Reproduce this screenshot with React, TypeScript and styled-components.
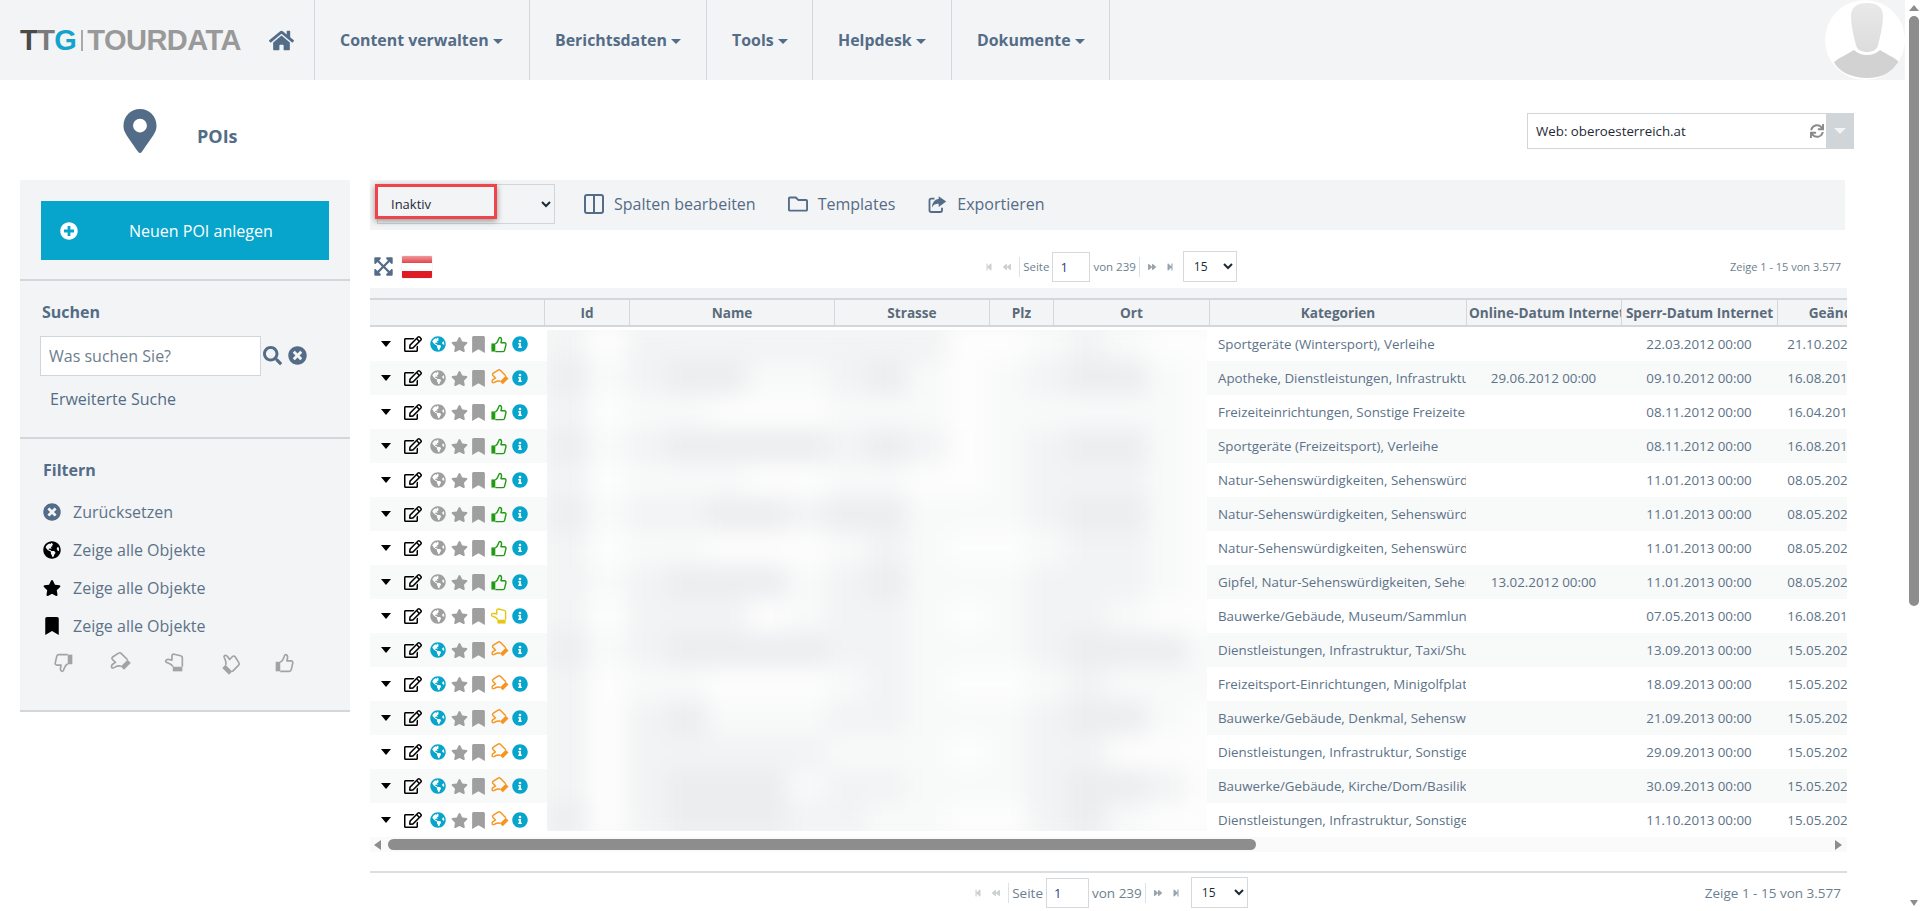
import styled, { createGlobalStyle } from 'styled-components'
import { Columns2 } from 'lucide-react'
import {
  FaBackward,
  FaBookmark,
  FaExpandArrowsAlt,
  FaForward,
  FaGlobeAmericas,
  FaHome,
  FaInfoCircle,
  FaMapMarkerAlt,
  FaPlusCircle,
  FaRegEdit,
  FaRegFolder,
  FaSearch,
  FaStar,
  FaStepBackward,
  FaStepForward,
  FaSync,
  FaTimesCircle,
} from 'react-icons/fa'

const colors = {
  panel: '#f3f4f6',
  line: '#d3d7da',
  slate: '#536c87',
  text: '#5c7288',
  blue: '#07a5cc',
  grey: '#9f9f9f',
  green: '#1f9a12',
  orange: '#f7941d',
  yellow: '#e6c814',
}

const GlobalStyle = createGlobalStyle`
  html, body {
    margin: 0;
    height: 100%;
    overflow: hidden;
    background: #fff;
  }
  body {
    font-family: "Open Sans", "Liberation Sans", sans-serif;
    color: ${colors.text};
  }
`

const Page = styled.div`
  display: flex;
  height: 911px;
  overflow: hidden;
`

const Main = styled.div`
  flex: 1;
  min-width: 0;
`

const PageScrollbar = styled.div`
  width: 15px;
  display: flex;
  flex-direction: column;
  align-items: center;
  background: #fff;
`

const ScrollThumbV = styled.div`
  width: 10px;
  height: 590px;
  margin-left: 3px;
  border-radius: 5px;
  background: #8d8d8d;
`

const ArrowUp = styled.div`
  margin: 5px 0 5px 3px;
  border-left: 5px solid transparent;
  border-right: 5px solid transparent;
  border-bottom: 6px solid #8d8d8d;
`

const ArrowDown = styled.div`
  margin: auto 0 5px 3px;
  border-left: 4px solid transparent;
  border-right: 4px solid transparent;
  border-top: 6px solid #8d8d8d;
`

const Header = styled.header`
  height: 80px;
  display: flex;
  align-items: stretch;
  background: ${colors.panel};
`

const Logo = styled.div`
  width: 269px;
  box-sizing: border-box;
  padding-left: 20px;
  display: flex;
  align-items: center;
  font-family: "Liberation Sans", Arial, sans-serif;
  font-size: 29px;
  font-weight: 700;
  letter-spacing: -0.55px;
  color: #999;
`

const LogoPart = styled.span<{ $color: string }>`
  color: ${(p) => p.$color};
`

const LogoBar = styled.span`
  width: 2px;
  height: 21px;
  margin: 0 4px 0 5px;
  background: #aaa;
`

const HomeLink = styled.a`
  width: 45px;
  display: flex;
  align-items: center;
  color: ${colors.slate};
  font-size: 25px;
`

const NavItem = styled.a<{ $width: number; $last?: boolean }>`
  width: ${(p) => p.$width}px;
  box-sizing: border-box;
  display: flex;
  align-items: center;
  padding-left: 25px;
  border-left: 1px solid ${colors.line};
  border-right: ${(p) => (p.$last ? `1px solid ${colors.line}` : 'none')};
  font-size: 15.9px;
  font-weight: 700;
  color: ${colors.slate};
`

const Caret = styled.span`
  margin-left: 4px;
  margin-top: 2px;
  border-left: 5px solid transparent;
  border-right: 5px solid transparent;
  border-top: 5px solid ${colors.slate};
`

const Avatar = styled.div`
  margin-left: auto;
  width: 80px;
  height: 80px;
  border-radius: 50%;
  overflow: hidden;
  background: #fff;
`

const TitleRow = styled.div`
  height: 100px;
  display: flex;
  align-items: flex-start;
  padding-left: 118px;
`

const TitleIcon = styled.div`
  width: 79px;
  margin-top: 29px;
  color: ${colors.slate};
  font-size: 44px;
  line-height: 1;
`

const Title = styled.h1`
  margin: 44px 0 0;
  font-size: 18px;
  line-height: 24px;
  font-weight: 700;
  color: ${colors.slate};
`

const WebSelect = styled.div`
  margin: 33px 51px 0 auto;
  width: 327px;
  height: 36px;
  box-sizing: border-box;
  display: flex;
  align-items: stretch;
  border: 1px solid #cfd5d8;
  background: #fff;
`

const WebLabel = styled.span`
  flex: 1;
  display: flex;
  align-items: center;
  padding-left: 8px;
  font-size: 13.3px;
  color: #1d2a36;
`

const WebRefresh = styled.span`
  display: flex;
  align-items: center;
  padding-right: 2px;
  color: #8a8a8a;
  font-size: 14px;
`

const WebArrow = styled.span`
  width: 27px;
  display: flex;
  align-items: center;
  justify-content: center;
  background: #cfd5d8;

  &::after {
    content: '';
    border-left: 6px solid transparent;
    border-right: 6px solid transparent;
    border-top: 6px solid #f2f4f5;
  }
`

const Content = styled.div`
  display: flex;
  align-items: flex-start;
  gap: 20px;
  padding-left: 20px;
`

const Sidebar = styled.aside`
  width: 330px;
  flex: none;
  background: ${colors.panel};
`

const SideSection = styled.section`
  border-bottom: 2px solid ${colors.line};
`

const CreateSection = styled(SideSection)`
  height: 101px;
  box-sizing: border-box;
  padding: 21px 21px 0;
`

const SearchSection = styled(SideSection)`
  height: 158px;
  box-sizing: border-box;
  padding: 19px 20px 0;
`

const FilterSection = styled(SideSection)`
  height: 273px;
  box-sizing: border-box;
  padding: 19px 23px 0;
`

const CreateButton = styled.button`
  width: 100%;
  height: 59px;
  display: flex;
  align-items: center;
  border: 0;
  padding: 0 0 0 19px;
  background: ${colors.blue};
  color: #fff;
  font-family: inherit;
  font-size: 16px;
`

const CreateLabel = styled.span`
  margin-left: 51px;
`

const SideTitle = styled.h2`
  margin: 0 0 12px 2px;
  font-size: 16px;
  line-height: 24px;
  font-weight: 700;
  color: ${colors.slate};
`

const FilterTitle = styled(SideTitle)`
  margin: 0 0 11px;
`

const SearchRow = styled.div`
  display: flex;
  align-items: flex-start;
  color: ${colors.slate};
`

const SearchInput = styled.input`
  width: 221px;
  height: 40px;
  box-sizing: border-box;
  border: 1px solid #cfd5d8;
  padding: 0 8px;
  font-family: inherit;
  font-size: 16px;
  background: #fff;

  &::placeholder {
    color: #6d7d8c;
    opacity: 1;
  }
`

const SearchIcons = styled.div`
  display: flex;
  align-items: center;
  gap: 6px;
  height: 38px;
  margin-left: 2px;
  font-size: 19px;
`

const AdvancedLink = styled.a`
  display: block;
  margin: 12px 0 0 10px;
  font-size: 16px;
  line-height: 22px;
  color: ${colors.slate};
`

const FilterRow = styled.div`
  display: flex;
  align-items: center;
  height: 38px;
  font-size: 16px;
`

const FilterIcon = styled.span<{ $color?: string }>`
  width: 30px;
  display: flex;
  align-items: center;
  font-size: 18px;
  color: ${(p) => p.$color || '#000'};
`

const RatingRow = styled.div`
  display: flex;
  align-items: center;
  gap: 35px;
  padding: 0 0 0 11px;
  margin-top: 8px;
`

const ThumbSvg = styled.svg<{ $angle: number; $size: number }>`
  width: ${(p) => p.$size}px;
  height: ${(p) => p.$size}px;
  flex: none;
  transform: rotate(${(p) => p.$angle}deg);
`

const ThumbSlot = styled.span`
  display: flex;
  margin-right: 5px;
`

const TableArea = styled.main`
  width: 1477px;
  flex: none;
`

const Toolbar = styled.div`
  position: relative;
  height: 50px;
  box-sizing: border-box;
  margin-right: 2px;
  display: flex;
  align-items: flex-start;
  padding: 4px 0 0 7px;
  background: ${colors.panel};
`

const StatusSelect = styled.select`
  width: 178px;
  height: 40px;
  margin-right: 29px;
  padding-left: 9px;
  border: 1px solid #cfd5d8;
  background: ${colors.panel};
  font-family: inherit;
  font-size: 13px;
  color: #1d2a36;
`

const RedMark = styled.div`
  position: absolute;
  left: 5px;
  top: 4px;
  width: 122px;
  height: 35px;
  box-sizing: border-box;
  border: 3px solid #f0434a;
  box-shadow: 0 2px 6px rgba(0, 0, 0, 0.4);
`

const ToolAction = styled.a`
  display: flex;
  align-items: center;
  height: 40px;
  margin-right: 32px;
  gap: 10px;
  font-size: 16px;
  color: ${colors.slate};
`

const ToolIcon = styled.span`
  width: 20px;
  display: flex;
  justify-content: center;
  font-size: 20px;
`

const ColumnsIcon = styled(Columns2)`
  flex: none;
`

const PagerRow = styled.div<{ $bottom?: boolean }>`
  display: grid;
  grid-template-columns: 1fr auto 1fr;
  align-items: center;
  height: ${(p) => (p.$bottom ? '30px' : '31px')};
  margin: ${(p) => (p.$bottom ? '4px 0 0' : '21px 0 6px')};
`

const FlagRow = styled.div`
  display: flex;
  align-items: center;
  gap: 8px;
  padding-left: 3px;
  color: ${colors.slate};
  font-size: 21px;
`

const Flag = styled.div`
  width: 30px;
  height: 22px;
  border-radius: 1px;
  background: linear-gradient(
    #ef9a9e 0,
    #e2454b 32%,
    #fff 33%,
    #fff 66%,
    #dd1c24 67%,
    #dd1c24 100%
  );
  box-shadow: 0 0 1px rgba(0, 0, 0, 0.35);
`

const Pager = styled.div<{ $large?: boolean }>`
  display: flex;
  align-items: center;
  font-size: ${(p) => (p.$large ? '13.5px' : '11.5px')};
  color: #6c7f90;
`

const PagerGlyph = styled.span<{ $on?: boolean }>`
  display: flex;
  margin: 0 5px;
  font-size: 8px;
  color: ${(p) => (p.$on ? '#9aa4ad' : '#cbd0d4')};
`

const PagerDivider = styled.span`
  width: 1px;
  height: 20px;
  margin: 0 3px;
  background: #dfe2e4;
`

const PageInput = styled.input<{ $large?: boolean }>`
  width: ${(p) => (p.$large ? '43px' : '38px')};
  height: 100%;
  min-height: 30px;
  box-sizing: border-box;
  margin: 0 3px;
  padding: 0 7px;
  border: 1px solid #d5d9dc;
  font-family: inherit;
  font-size: 13px;
  color: #2c3a8a;
  background: #fff;
`

const PageSize = styled.select<{ $large?: boolean }>`
  width: ${(p) => (p.$large ? '57px' : '54px')};
  height: 31px;
  margin-left: ${(p) => (p.$large ? '6px' : '4px')};
  padding-left: 6px;
  border: 1px solid #d5d9dc;
  background: #fff;
  font-family: inherit;
  font-size: 12px;
  color: #1d2a36;
`

const Summary = styled.div<{ $large?: boolean }>`
  justify-self: end;
  padding-right: 6px;
  font-size: ${(p) => (p.$large ? '13.5px' : '11px')};
  color: #6c7f90;
`

const TableWrap = styled.div`
  position: relative;
  overflow: hidden;
`

const TableBand = styled.div`
  height: 10px;
  background: ${colors.panel};
`

const Table = styled.table`
  width: 1533px;
  table-layout: fixed;
  border-collapse: separate;
  border-spacing: 0;
`

const Col = styled.col<{ $w: number }>`
  width: ${(p) => p.$w}px;
`

const HeadCell = styled.th`
  height: 29px;
  box-sizing: border-box;
  padding: 0 2px;
  border-top: 2px solid ${colors.line};
  border-bottom: 2px solid ${colors.line};
  border-left: 1px solid ${colors.line};
  background: ${colors.panel};
  font-size: 13.6px;
  font-weight: 700;
  color: #5a6b7b;
  white-space: nowrap;
  overflow: hidden;

  &:first-child {
    border-left: 0;
  }
`

const Row = styled.tr`
  height: 34px;

  &:nth-child(even) {
    background: #f8f9f9;
  }
`

const Cell = styled.td<{ $center?: boolean }>`
  padding: ${(p) => (p.$center ? '0' : '0 0 0 9px')};
  text-align: ${(p) => (p.$center ? 'center' : 'left')};
  font-size: 13.33px;
  white-space: nowrap;
  overflow: hidden;
`

const IconCell = styled.div`
  display: flex;
  align-items: center;
  height: 34px;
  padding-left: 11px;
`

const RowCaret = styled.span`
  margin-right: 13px;
  border-left: 5.5px solid transparent;
  border-right: 5.5px solid transparent;
  border-top: 6px solid #000;
`

const RowIcon = styled.span<{ $color: string; $size: number; $gap: number }>`
  display: flex;
  margin-right: ${(p) => p.$gap}px;
  font-size: ${(p) => p.$size}px;
  color: ${(p) => p.$color};
`

const BlurCover = styled.div`
  position: absolute;
  left: 177px;
  top: 42px;
  width: 660px;
  height: 501px;
  overflow: hidden;
  background: #f6f7f7;
`

const BlurInner = styled.div`
  margin: -3px -20px 0 0;
  filter: blur(11px);
`

const BlurRow = styled.div`
  display: flex;
  height: 34px;
`

const Smudge = styled.span<{ $tone: string }>`
  width: 40px;
  flex: none;
  background: ${(p) => ['#fdfdfd', '#f8f9f9', '#f2f3f4', '#ecedef'][Number(p.$tone)]};
`

const HScroll = styled.div`
  height: 15px;
  display: flex;
  align-items: center;
  padding: 0 5px 0 4px;
  background: #fafafa;
`

const ArrowLeft = styled.span`
  border-top: 5px solid transparent;
  border-bottom: 5px solid transparent;
  border-right: 7px solid #8d8d8d;
`

const ArrowRight = styled.span`
  margin-left: auto;
  border-top: 5px solid transparent;
  border-bottom: 5px solid transparent;
  border-left: 7px solid #8d8d8d;
`

const HThumb = styled.span`
  width: 868px;
  height: 11px;
  margin-left: 7px;
  border-radius: 6px;
  background: #8d8d8d;
`

const BottomRule = styled.div`
  margin-top: 19px;
  border-top: 2px solid #dcdfe1;
`

const Thumb = ({ angle, color, size = 20 }: { angle: number; color: string; size?: number }) => (
  <ThumbSvg $angle={angle} $size={size} viewBox="0 0 24 24">
    <rect x="2" y="10.5" width="5.5" height="11.5" fill={color} />
    <path
      d="M7.5 11C9.5 10 11 8 12 5c.4-2 .6-3 1.8-3 2 0 2.8 2 2.4 4l-.7 3.5h5c1.6 0 2.3 1.3 2 2.7L20.7 20c-.3 1.2-1 2-2.3 2H7.5"
      fill="none"
      stroke={color}
      strokeWidth="2"
      strokeLinejoin="round"
    />
  </ThumbSvg>
)

// outline box with a filled arrow, the react-icons one only has an outlined arrow
const ExportIcon = () => (
  <svg width="21" height="21" viewBox="0 0 24 24" fill="none">
    <path
      d="M9 5H5a2 2 0 0 0-2 2v12a2 2 0 0 0 2 2h11a2 2 0 0 0 2-2v-3"
      stroke={colors.slate}
      strokeWidth="2.2"
    />
    <path d="M14 2l9 6.5-9 6.5v-4c-4 0-6.500 1-8 5 0-6 3-10 8-10.500z" fill={colors.slate} />
  </svg>
)

const navItems = [
  { label: 'Content verwalten', width: 215 },
  { label: 'Berichtsdaten', width: 177 },
  { label: 'Tools', width: 106 },
  { label: 'Helpdesk', width: 139 },
  { label: 'Dokumente', width: 159 },
]

const columns = [
  { label: '', width: 174 },
  { label: 'Id', width: 85 },
  { label: 'Name', width: 205 },
  { label: 'Strasse', width: 155 },
  { label: 'Plz', width: 64 },
  { label: 'Ort', width: 156 },
  { label: 'Kategorien', width: 257 },
  { label: 'Online-Datum Internet', width: 155 },
  { label: 'Sperr-Datum Internet', width: 156 },
  { label: 'Geändert', width: 126 },
]

type Status = 'up' | 'side' | 'hold'

const rows: { cat: string; online?: string; locked: string; changed: string; web: boolean; status: Status }[] = [
  { cat: 'Sportgeräte (Wintersport), Verleihe', locked: '22.03.2012', changed: '21.10.2021', web: true, status: 'up' },
  { cat: 'Apotheke, Dienstleistungen, Infrastruktur', online: '29.06.2012', locked: '09.10.2012', changed: '16.08.2018', web: false, status: 'side' },
  { cat: 'Freizeiteinrichtungen, Sonstige Freizeiteinrichtungen', locked: '08.11.2012', changed: '16.04.2019', web: false, status: 'up' },
  { cat: 'Sportgeräte (Freizeitsport), Verleihe', locked: '08.11.2012', changed: '16.08.2018', web: false, status: 'up' },
  { cat: 'Natur-Sehenswürdigkeiten, Sehenswürdigkeiten', locked: '11.01.2013', changed: '08.05.2020', web: false, status: 'up' },
  { cat: 'Natur-Sehenswürdigkeiten, Sehenswürdigkeiten', locked: '11.01.2013', changed: '08.05.2020', web: false, status: 'up' },
  { cat: 'Natur-Sehenswürdigkeiten, Sehenswürdigkeiten', locked: '11.01.2013', changed: '08.05.2020', web: false, status: 'up' },
  { cat: 'Gipfel, Natur-Sehenswürdigkeiten, Sehenswürdigkeiten', online: '13.02.2012', locked: '11.01.2013', changed: '08.05.2020', web: false, status: 'up' },
  { cat: 'Bauwerke/Gebäude, Museum/Sammlung', locked: '07.05.2013', changed: '16.08.2018', web: false, status: 'hold' },
  { cat: 'Dienstleistungen, Infrastruktur, Taxi/Shuttle', locked: '13.09.2013', changed: '15.05.2020', web: true, status: 'side' },
  { cat: 'Freizeitsport-Einrichtungen, Minigolfplatz', locked: '18.09.2013', changed: '15.05.2020', web: true, status: 'side' },
  { cat: 'Bauwerke/Gebäude, Denkmal, Sehenswürdigkeiten', locked: '21.09.2013', changed: '15.05.2020', web: true, status: 'side' },
  { cat: 'Dienstleistungen, Infrastruktur, Sonstige Angebote', locked: '29.09.2013', changed: '15.05.2020', web: true, status: 'side' },
  { cat: 'Bauwerke/Gebäude, Kirche/Dom/Basilika', locked: '30.09.2013', changed: '15.05.2020', web: true, status: 'side' },
  { cat: 'Dienstleistungen, Infrastruktur, Sonstige Angebote', locked: '11.10.2013', changed: '15.05.2020', web: true, status: 'side' },
]

const statusThumb: Record<Status, { angle: number; color: string }> = {
  up: { angle: 0, color: colors.green },
  side: { angle: -135, color: colors.orange },
  hold: { angle: -90, color: colors.yellow },
}

// tone map of the pixelated name/address columns, one digit per 40px
const smudges = [
  '20222222220012100',
  '31233112310123310',
  '20110001110111110',
  '31233332320123310',
  '20111001100122210',
  '31223323311123310',
  '20110001210012210',
  '21233312311122210',
  '20222012210122100',
  '31233332211123331',
  '20110001210012111',
  '20231112211123310',
  '20222221110122000',
  '20233312211123320',
  '30233322110023100',
]

const PageControls = ({ large }: { large?: boolean }) => (
  <Pager $large={large}>
    <PagerGlyph><FaStepBackward /></PagerGlyph>
    <PagerGlyph><FaBackward /></PagerGlyph>
    <PagerDivider />
    Seite
    <PageInput $large={large} readOnly value="1" />
    von 239
    <PagerDivider />
    <PagerGlyph $on><FaForward /></PagerGlyph>
    <PagerGlyph $on><FaStepForward /></PagerGlyph>
    <PageSize $large={large} defaultValue="15">
      <option>15</option>
    </PageSize>
  </Pager>
)

export default function App() {
  return (
    <Page>
      <GlobalStyle />
      <Main>
        <Header>
          <Logo>
            <LogoPart $color="#4a4a4a">T</LogoPart>
            <LogoPart $color="#7a7a7a">T</LogoPart>
            <LogoPart $color="#12a4cd">G</LogoPart>
            <LogoBar />
            TOURDATA
          </Logo>
          <HomeLink><FaHome /></HomeLink>
          {navItems.map((item, i) => (
            <NavItem key={item.label} $width={item.width} $last={i === navItems.length - 1}>
              {item.label}
              <Caret />
            </NavItem>
          ))}
          <Avatar>
            <svg width="80" height="80" viewBox="0 0 80 80">
              <defs>
                <linearGradient id="head" x1="0" y1="0" x2="0" y2="1">
                  <stop offset="0" stopColor="#e9e9e9" />
                  <stop offset="1" stopColor="#dcdcdc" />
                </linearGradient>
              </defs>
              <path d="M26 16C26 7 32 3 42 3s16 4 16 13c0 9-3 22-5 29-1 5-6 7-11 7s-10-2-11-7c-2-7-5-20-5-29z" fill="url(#head)" />
              <path d="M9 62c6-5 14-8 20-12 3 3 8 5 13 5s10-2 13-5c6 4 14 7 19 12-4 9-16 16-32 16-16 0-29-7-33-16z" fill="#d2d2d2" />
            </svg>
          </Avatar>
        </Header>

        <TitleRow>
          <TitleIcon><FaMapMarkerAlt /></TitleIcon>
          <Title>POIs</Title>
          <WebSelect>
            <WebLabel>Web: oberoesterreich.at</WebLabel>
            <WebRefresh><FaSync /></WebRefresh>
            <WebArrow />
          </WebSelect>
        </TitleRow>

        <Content>
          <Sidebar>
            <CreateSection>
              <CreateButton>
                <FaPlusCircle size={18} />
                <CreateLabel>Neuen POI anlegen</CreateLabel>
              </CreateButton>
            </CreateSection>
            <SearchSection>
              <SideTitle>Suchen</SideTitle>
              <SearchRow>
                <SearchInput placeholder="Was suchen Sie?" />
                <SearchIcons>
                  <FaSearch />
                  <FaTimesCircle />
                </SearchIcons>
              </SearchRow>
              <AdvancedLink>Erweiterte Suche</AdvancedLink>
            </SearchSection>
            <FilterSection>
              <FilterTitle>Filtern</FilterTitle>
              <FilterRow>
                <FilterIcon $color={colors.slate}><FaTimesCircle /></FilterIcon>
                Zurücksetzen
              </FilterRow>
              <FilterRow>
                <FilterIcon><FaGlobeAmericas /></FilterIcon>
                Zeige alle Objekte
              </FilterRow>
              <FilterRow>
                <FilterIcon><FaStar /></FilterIcon>
                Zeige alle Objekte
              </FilterRow>
              <FilterRow>
                <FilterIcon><FaBookmark /></FilterIcon>
                Zeige alle Objekte
              </FilterRow>
              <RatingRow>
                {[180, -135, -90, -45, 0].map((angle) => (
                  <Thumb key={angle} angle={angle} color="#a3a3a3" />
                ))}
              </RatingRow>
            </FilterSection>
          </Sidebar>

          <TableArea>
            <Toolbar>
              <StatusSelect defaultValue="Inaktiv">
                <option>Inaktiv</option>
              </StatusSelect>
              <RedMark />
              <ToolAction>
                <ToolIcon><ColumnsIcon size={24} strokeWidth={2} /></ToolIcon>
                Spalten bearbeiten
              </ToolAction>
              <ToolAction>
                <ToolIcon><FaRegFolder /></ToolIcon>
                Templates
              </ToolAction>
              <ToolAction>
                <ToolIcon><ExportIcon /></ToolIcon>
                Exportieren
              </ToolAction>
            </Toolbar>

            <PagerRow>
              <FlagRow>
                <FaExpandArrowsAlt />
                <Flag />
              </FlagRow>
              <PageControls />
              <Summary>Zeige 1 - 15 von 3.577</Summary>
            </PagerRow>

            <TableWrap>
              <TableBand />
              <Table>
                <colgroup>
                  {columns.map((c) => (
                    <Col key={c.label} $w={c.width} />
                  ))}
                </colgroup>
                <thead>
                  <tr>
                    {columns.map((c) => (
                      <HeadCell key={c.label}>{c.label}</HeadCell>
                    ))}
                  </tr>
                </thead>
                <tbody>
                  {rows.map((r, i) => (
                    <Row key={i}>
                      <Cell $center>
                        <IconCell>
                          <RowCaret />
                          <RowIcon $color="#000" $size={18} $gap={8}><FaRegEdit /></RowIcon>
                          <RowIcon $color={r.web ? colors.blue : colors.grey} $size={16} $gap={5}><FaGlobeAmericas /></RowIcon>
                          <RowIcon $color={colors.grey} $size={17} $gap={2}><FaStar /></RowIcon>
                          <RowIcon $color={colors.grey} $size={17} $gap={3}><FaBookmark /></RowIcon>
                          <ThumbSlot><Thumb {...statusThumb[r.status]} size={17} /></ThumbSlot>
                          <RowIcon $color={colors.blue} $size={16} $gap={0}><FaInfoCircle /></RowIcon>
                        </IconCell>
                      </Cell>
                      <Cell colSpan={5} />
                      <Cell>{r.cat}</Cell>
                      <Cell $center>{r.online ? `${r.online} 00:00` : ''}</Cell>
                      <Cell $center>{r.locked} 00:00</Cell>
                      <Cell $center>{r.changed} 00:00</Cell>
                    </Row>
                  ))}
                </tbody>
              </Table>
              <BlurCover>
                <BlurInner>
                  {smudges.map((line, i) => (
                    <BlurRow key={i}>
                      {line.split('').map((tone, j) => (
                        <Smudge key={j} $tone={tone} />
                      ))}
                    </BlurRow>
                  ))}
                </BlurInner>
              </BlurCover>
              <HScroll>
                <ArrowLeft />
                <HThumb />
                <ArrowRight />
              </HScroll>
            </TableWrap>

            <BottomRule />
            <PagerRow $bottom>
              <span />
              <PageControls large />
              <Summary $large>Zeige 1 - 15 von 3.577</Summary>
            </PagerRow>
          </TableArea>
        </Content>
      </Main>
      <PageScrollbar>
        <ArrowUp />
        <ScrollThumbV />
        <ArrowDown />
      </PageScrollbar>
    </Page>
  )
}
